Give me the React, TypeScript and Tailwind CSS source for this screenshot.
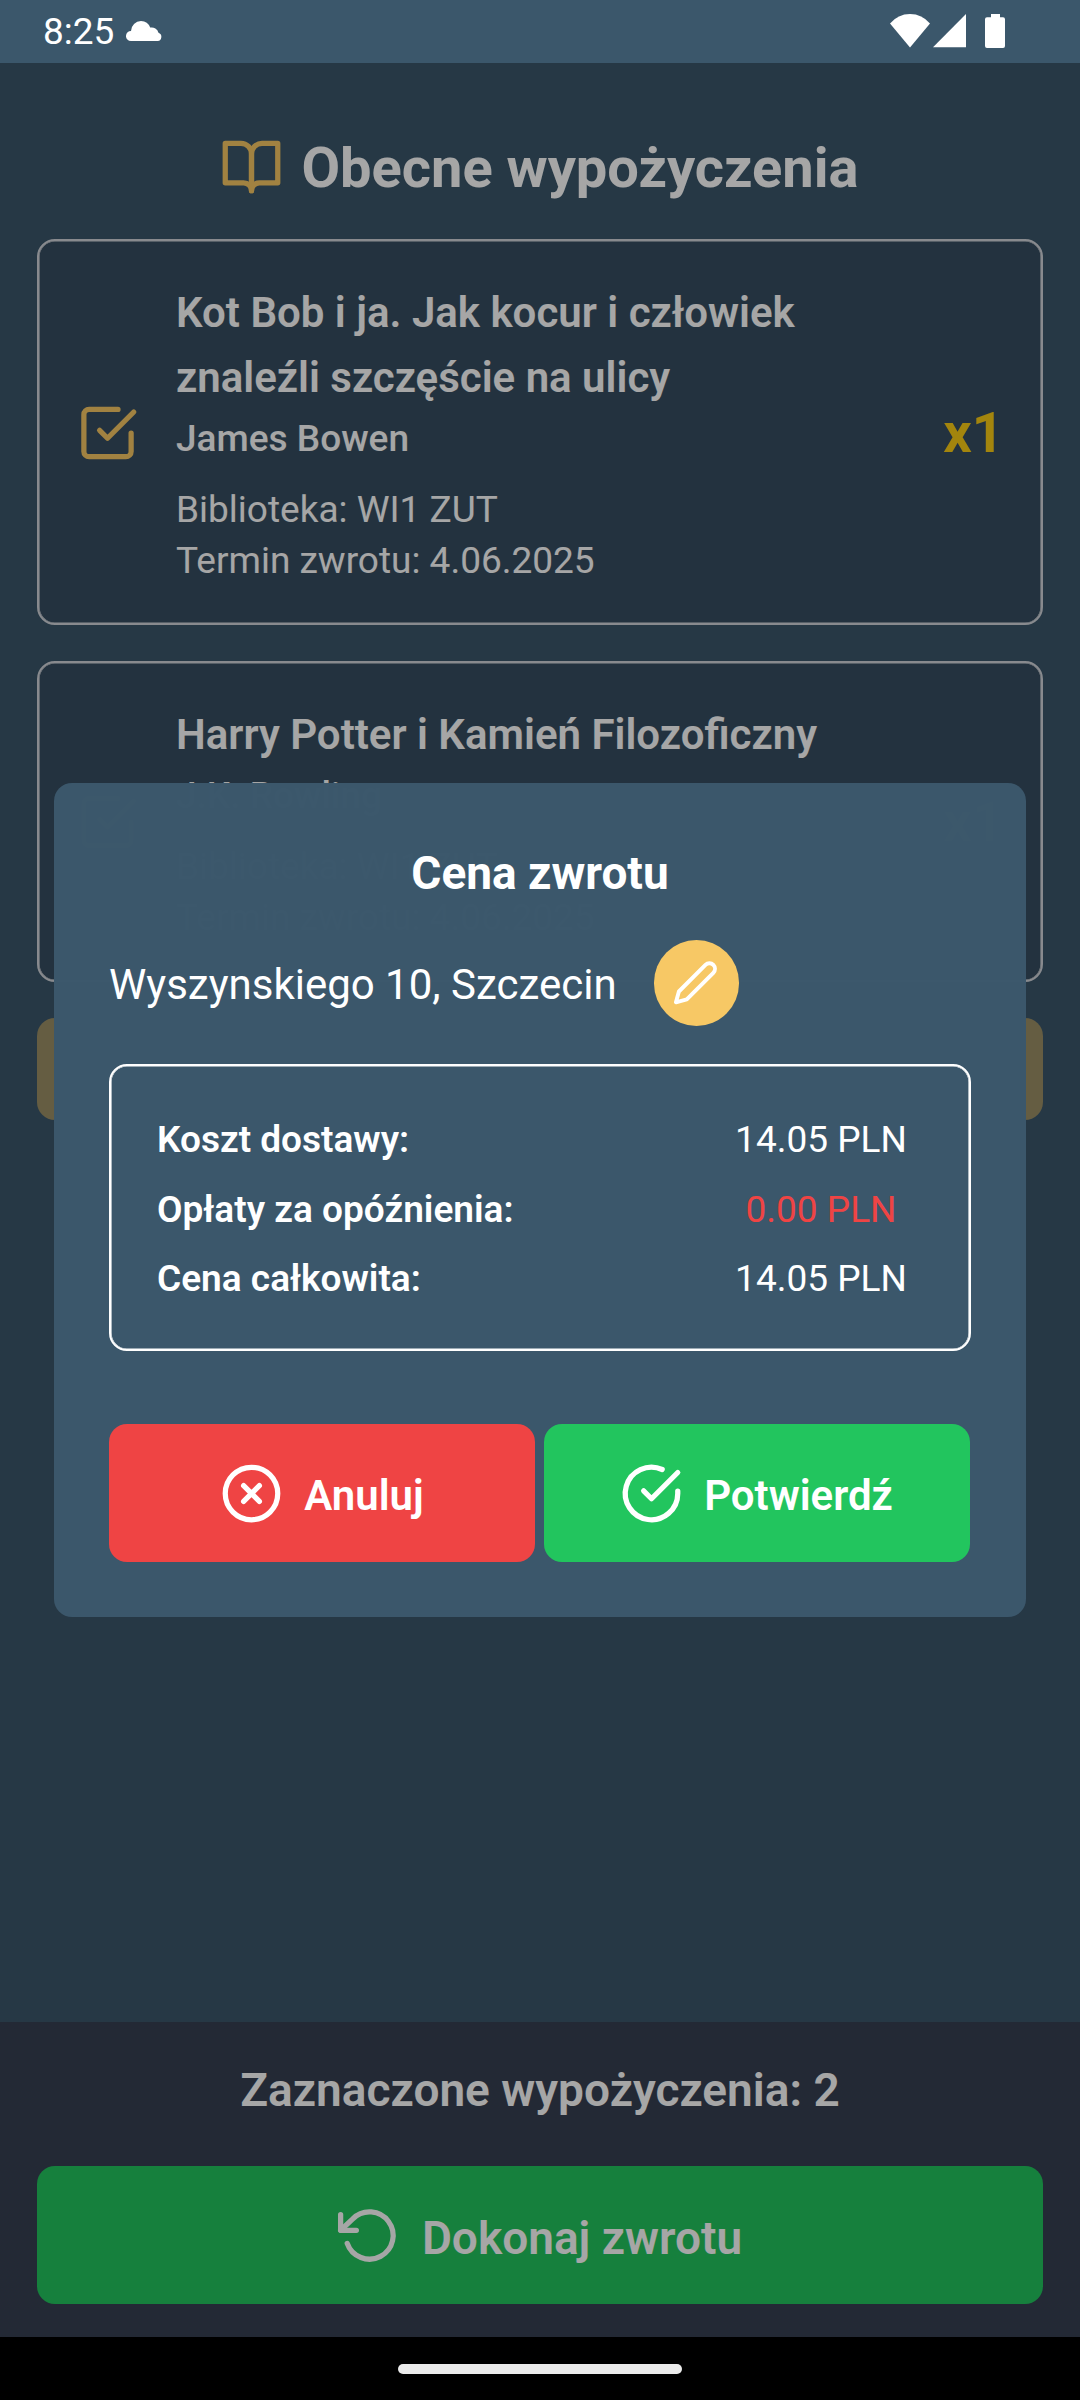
import type { ReactNode } from "react";

function Icon({ className, children }: { className: string; children: ReactNode }) {
  return (
    <svg
      viewBox="0 0 24 24"
      fill="none"
      stroke="currentColor"
      strokeWidth="2"
      strokeLinecap="round"
      strokeLinejoin="round"
      className={`shrink-0 overflow-visible ${className}`}
    >
      {children}
    </svg>
  );
}

function StatusBar() {
  return (
    <header className="flex h-[63px] shrink-0 items-start bg-[#3b576b] pl-[43px] text-white">
      <span className="mt-[10px] text-[37px] leading-[44px]">8:25</span>
      <svg viewBox="0 0 36 20" className="mt-[21px] ml-[12px] h-[20px] w-[36px]" fill="currentColor">
        <path d="M5 20a5 5 0 0 1-5-5.3A5 5 0 0 1 5 10 10.3 10.3 0 0 1 15 0a10 10 0 0 1 9.200 6.600A7 7 0 0 1 32.500 11.700 4.300 4.300 0 0 1 31.700 20z" />
      </svg>
      <div className="mt-[14px] ml-auto flex items-start pr-[75px]">
        <svg viewBox="0 0 40 34" className="h-[34px] w-[40px]" fill="currentColor">
          <path d="M0 9.500Q8 0 20 0T40 9.500L20 33.500z" />
        </svg>
        <svg viewBox="0 0 33 34" className="ml-[3px] h-[34px] w-[33px]" fill="currentColor">
          <path d="M33 0V33.300H0z" />
        </svg>
        <svg viewBox="0 0 20 34" className="ml-[19px] h-[34px] w-[20px]" fill="currentColor">
          <path d="M6 0h9v3.300h3a2 2 0 0 1 2 2V32a2 2 0 0 1-2 2H2a2 2 0 0 1-2-2V5.300a2 2 0 0 1 2-2h4z" />
        </svg>
      </div>
    </header>
  );
}

type Loan = { title: string; author: string; library: string; due: string; count: number };

const loans: Loan[] = [
  {
    title: "Kot Bob i ja. Jak kocur i człowiek znaleźli szczęście na ulicy",
    author: "James Bowen",
    library: "WI1 ZUT",
    due: "4.06.2025",
    count: 1,
  },
  {
    title: "Harry Potter i Kamień Filozoficzny",
    author: "J.K. Rowling",
    library: "WI1 ZUT",
    due: "4.06.2025",
    count: 1,
  },
];

function LoanCard({ loan }: { loan: Loan }) {
  return (
    <article className="flex items-center rounded-[18px] border-2 border-[#d1d5db] bg-[#374e61] pt-[39px] pr-[37px] pb-[37px] pl-[37px] shadow-[inset_0_0_0_0.6px_#d1d5db]">
      <Icon className="size-[63px] -translate-y-[0.5px] text-[#f7c865]">
        <path d="M9 11l3 3L22 4" />
        <path d="M21 12v7a2 2 0 0 1-2 2H5a2 2 0 0 1-2-2V5a2 2 0 0 1 2-2h11" />
      </Icon>
      <div className="ml-[37px] w-[660px]">
        <h2 className="text-[42px] leading-[65px] font-semibold">{loan.title}</h2>
        <p className="mt-[3px] text-[37px] leading-[51px] font-medium">{loan.author}</p>
        <p className="mt-[20px] text-[37px] leading-[51px]">Biblioteka: {loan.library}</p>
        <p className="text-[37px] leading-[51px]">Termin zwrotu: {loan.due}</p>
      </div>
      <span className="mb-[1px] ml-auto text-[56px] leading-[64px] font-bold text-[#facc15]">x{loan.count}</span>
    </article>
  );
}

const costs = [
  { label: "Koszt dostawy:", value: "14.05 PLN", tone: "text-white" },
  { label: "Opłaty za opóźnienia:", value: "0.00 PLN", tone: "text-[#ef4444]" },
  { label: "Cena całkowita:", value: "14.05 PLN", tone: "text-white" },
];

function PriceModal() {
  return (
    <section className="h-[834px] w-[972px] rounded-[18px] bg-[#3b576bfe] px-[55px] pt-[63px] text-white">
      <h2 className="text-center text-[46px] leading-[54px] font-bold">Cena zwrotu</h2>
      <div className="mt-[40px] flex h-[86px] items-center">
        <span className="mt-[4px] text-[42px] leading-[50px]">Wyszynskiego 10, Szczecin</span>
        <button className="ml-[37px] flex h-[86px] w-[85px] items-center justify-center rounded-full bg-[#f7c865]">
          <Icon className="size-[47.25px]">
            <path d="M17 3a2.828 2.828 0 1 1 4 4L7.5 20.500 2 22l1.500-5.500L17 3z" />
          </Icon>
        </button>
      </div>
      <div className="mt-[38px] flex h-[287px] flex-col justify-center rounded-[18px] border-2 border-white pt-[4px] pl-[46px] shadow-[inset_0_0_0_0.6px_#ffffff]">
        {costs.map((c) => (
          <div key={c.label} className="flex h-[69.6px] items-center">
            <span className="text-[37px] leading-[44px] font-semibold">{c.label}</span>
            <span className={`mr-[38px] ml-auto w-[220px] text-center text-[37px] leading-[44px] ${c.tone}`}>
              {c.value}
            </span>
          </div>
        ))}
      </div>
      <div className="mt-[73px] flex gap-[9px]">
        <button className="flex h-[138px] w-[426px] shrink-0 items-center justify-center rounded-[18px] bg-[#ef4444]">
          <Icon className="size-[63px]">
            <circle cx="12" cy="12" r="10" />
            <path d="M15 9l-6 6M9 9l6 6" />
          </Icon>
          <span className="mt-[5px] ml-[21px] text-[42px] leading-[50px] font-semibold">Anuluj</span>
        </button>
        <button className="flex h-[138px] w-[426px] shrink-0 items-center justify-center rounded-[18px] bg-[#22c55e] pr-[1px]">
          <Icon className="size-[63px]">
            <path d="M22 11.080V12a10 10 0 1 1-5.930-9.140" />
            <path d="M9 11l3 3L22 4" />
          </Icon>
          <span className="mt-[5px] ml-[21px] text-[42px] leading-[50px] font-semibold">Potwierdź</span>
        </button>
      </div>
    </section>
  );
}

export default function App() {
  return (
    <div className="flex h-[2400px] w-[1080px] flex-col overflow-hidden bg-black font-[Roboto,sans-serif]">
      <StatusBar />
      <div className="relative flex flex-1 flex-col bg-[#3b576b] text-white">
        <main className="flex flex-1 flex-col px-[37px] pt-[70px]">
          <div className="flex h-[70px] items-center justify-center pr-[1px]">
            <Icon className="size-[63px] -translate-y-[1.5px] text-[#f7c865]">
              <path d="M2 3h6a4 4 0 0 1 4 4v14a3 3 0 0 0-3-3H2z" />
              <path d="M22 3h-6a4 4 0 0 0-4 4v14a3 3 0 0 1 3-3h7z" />
            </Icon>
            <h1 className="ml-[18px] text-[56px] leading-[66px] font-bold">Obecne wypożyczenia</h1>
          </div>
          <div className="mt-[36px] flex flex-col gap-[36px]">
            {loans.map((l) => (
              <LoanCard key={l.title} loan={l} />
            ))}
          </div>
          <div className="mt-[36px] h-[102px] rounded-[18px] bg-[#9b8f66]" />
        </main>
        <footer className="h-[315px] bg-[#374052] px-[37px] pt-[41px]">
          <p className="text-center text-[46px] leading-[54px] font-semibold">Zaznaczone wypożyczenia: 2</p>
          <button className="mt-[49px] flex h-[138px] w-full items-center justify-center rounded-[18px] bg-[#22c55e]">
            <Icon className="size-[63px]">
              <path d="M1 4v6h6" />
              <path d="M3.510 15a9 9 0 1 0 2.130-9.360L1 10" />
            </Icon>
            <span className="mt-[5px] ml-[21px] text-[46px] leading-[54px] font-semibold">Dokonaj zwrotu</span>
          </button>
        </footer>
        <div className="absolute inset-0 flex items-start justify-center bg-black/35 pt-[720px]">
          <PriceModal />
        </div>
      </div>
      <div className="flex h-[63px] shrink-0 items-start justify-center pt-[27px]">
        <div className="h-[10px] w-[284px] rounded-full bg-[#ebebeb]" />
      </div>
    </div>
  );
}
